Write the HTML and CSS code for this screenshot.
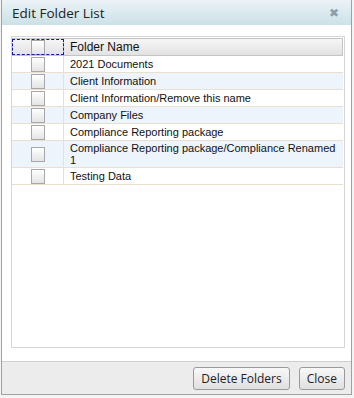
FILE: index.html
```html
<!DOCTYPE html>
<html lang="en">
<head>
  <meta charset="UTF-8">
  <meta name="viewport" content="width=device-width, initial-scale=1.0">
  <title>Edit Folder List</title>
  <link rel="stylesheet" href="styles.css">
</head>
<body>
  <div class="dialog">
    <div class="dialog-title">
      <span>Edit Folder List</span>
      <span class="close-x">&#x2716;</span>
    </div>
    <div class="dialog-body">
      <div class="grid">
        <div class="grid-row grid-head">
          <div class="cell-check focus"><span class="box"></span></div>
          <div class="cell-name">Folder Name</div>
        </div>
        <div class="grid-row">
          <div class="cell-check"><span class="box"></span></div>
          <div class="cell-name">2021 Documents</div>
        </div>
        <div class="grid-row alt">
          <div class="cell-check"><span class="box"></span></div>
          <div class="cell-name">Client Information</div>
        </div>
        <div class="grid-row">
          <div class="cell-check"><span class="box"></span></div>
          <div class="cell-name">Client Information/Remove this name</div>
        </div>
        <div class="grid-row alt">
          <div class="cell-check"><span class="box"></span></div>
          <div class="cell-name">Company Files</div>
        </div>
        <div class="grid-row">
          <div class="cell-check"><span class="box"></span></div>
          <div class="cell-name">Compliance Reporting package</div>
        </div>
        <div class="grid-row alt">
          <div class="cell-check"><span class="box"></span></div>
          <div class="cell-name">Compliance Reporting package/Compliance Renamed 1</div>
        </div>
        <div class="grid-row">
          <div class="cell-check"><span class="box"></span></div>
          <div class="cell-name">Testing Data</div>
        </div>
      </div>
    </div>
    <div class="dialog-footer">
      <button class="btn">Delete Folders</button>
      <button class="btn">Close</button>
    </div>
  </div>
</body>
</html>
```

FILE: styles.css
```css
body {
  margin: 0;
  padding: 0;
  background-color: #f4f4f4;
  font-family: 'Liberation Sans', Arial, sans-serif;
}
.dialog {
  margin-left: 1px;
  width: 349px;
  height: 394px;
  border: 1px solid #a0a0a0;
  border-top: none;
  background-color: #fff;
  display: flex;
  flex-direction: column;
}
.dialog-title {
  height: 25px;
  display: flex;
  align-items: center;
  justify-content: space-between;
  padding: 0 10px 0 10px;
  background: linear-gradient(#ebf3f6, #cbe1e7);
  font-family: 'Open Sans', 'Noto Sans', sans-serif;
  font-size: 13.5px;
  color: #222;
}
.close-x {
  font-family: 'DejaVu Sans', sans-serif;
  font-size: 12px;
  font-weight: bold;
  color: #8c9eab;
  margin-right: 2px;
}
.dialog-body {
  flex: 1;
  padding: 11px 6px 13px 9px;
}
.grid {
  height: 100%;
  box-sizing: border-box;
  border: 1px solid #d6d6d6;
  padding: 1px 1px 1px 0;
}
.grid-row {
  display: flex;
  border-bottom: 1px solid #e8dfcf;
  font-size: 11px;
  color: #111;
}
.grid-row.alt {
  background-color: #eef4fb;
}
.grid-head {
  background: linear-gradient(#f6f6f6, #e2e2e2);
  border: 1px solid #c4c4c4;
  border-left: none;
  font-size: 12px;
}
.cell-check {
  width: 51px;
  flex-shrink: 0;
  display: flex;
  align-items: center;
  justify-content: center;
  border-right: 1px solid #e8dfcf;
}
.grid-head .cell-check {
  border-right: 1px solid #d0d0d0;
}
.cell-check.focus {
  outline: 1px dashed #101c9c;
  outline-offset: -1px;
}
.box {
  width: 12px;
  height: 13px;
  border: 1px solid #a8a8a8;
  background: linear-gradient(#ffffff, #e4e4e4);
}
.cell-name {
  padding: 1px 2px 1px 6px;
  min-height: 14px;
  line-height: 12px;
  display: flex;
  align-items: center;
}
.dialog-footer {
  height: 32px;
  border-top: 1px solid #cfcfcf;
  background-color: #ececec;
  display: flex;
  align-items: center;
  justify-content: flex-end;
  gap: 9px;
  padding-right: 6px;
}
.btn {
  font-family: 'Open Sans', 'Noto Sans', sans-serif;
  font-size: 12px;
  color: #222;
  height: 23px;
  padding: 0 7px;
  border: 1px solid #9a9a9a;
  border-radius: 3px;
  background: linear-gradient(#f8f8f8, #e0e0e0);
}
```
